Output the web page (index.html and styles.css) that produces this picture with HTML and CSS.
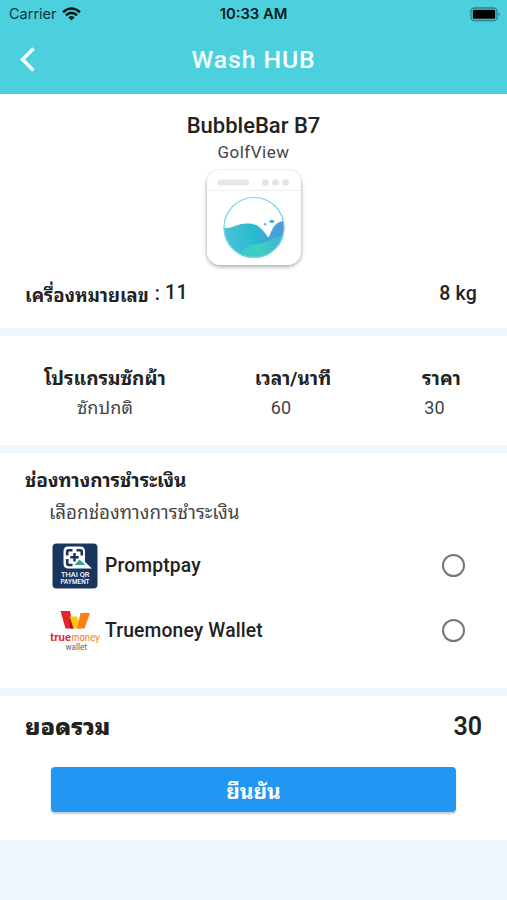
FILE: index.html
```
<!DOCTYPE html>
<html lang="th">
<head>
<meta charset="utf-8">
<title>Wash HUB</title>
<link rel="stylesheet" href="styles.css">
</head>
<body>
<header class="header">
  <div class="status">
    <div class="carrier"><span>Carrier</span>
      <svg width="19" height="14" viewBox="0 0 19 14" fill="none" stroke="#071a1d" stroke-width="2.5"><path d="M1 5.200Q9.500-2.200 18 5.200M3.900 8.200Q9.500 3.600 15.100 8.200"/><path d="M6.300 10.300Q9.500 7.500 12.700 10.300L9.500 13.500Z" fill="#071a1d" stroke="none"/></svg>
    </div>
    <div class="clock">10:33 AM</div>
    <svg class="battery" width="31" height="15" viewBox="0 0 31 15"><rect x="1" y="1" width="26" height="12.500" rx="3.500" fill="none" stroke="#2e7d86" stroke-width="1.300"/><rect x="2.800" y="2.800" width="22.400" height="9" rx="1.500" fill="#000"/><path d="M28.600 5.200Q31 7.200 28.600 9.400Z" fill="#2e7d86"/></svg>
  </div>
  <nav class="nav">
    <svg class="back" width="18" height="26" viewBox="0 0 18 26" fill="none" stroke="#fff" stroke-width="3.400"><path d="M15.500 1.500L4.500 12.500L15.500 23.500"/></svg>
    <h1>Wash HUB</h1>
  </nav>
</header>
<main>
  <section class="machine">
    <h2>BubbleBar B7</h2>
    <p>GolfView</p>
    <svg class="washer" width="106" height="108" viewBox="0 0 106 108">
      <defs>
        <linearGradient id="water" x1="0" y1="0" x2="1" y2="0"><stop offset="0" stop-color="#4bc4d8"/><stop offset=".5" stop-color="#27bad0"/><stop offset="1" stop-color="#5695da"/></linearGradient>
        <linearGradient id="foam" x1="0" y1="0" x2="1" y2="0"><stop offset="0" stop-color="#37cbc7"/><stop offset=".45" stop-color="#43d5c2"/><stop offset="1" stop-color="#41b4d4"/></linearGradient>
        <filter id="shade" x="-10%" y="-10%" width="120%" height="125%"><feDropShadow dx="0" dy="1.500" stdDeviation="2" flood-color="#000" flood-opacity=".38"/></filter>
        <clipPath id="drum"><circle cx="53" cy="58.500" r="30.500"/></clipPath>
      </defs>
      <rect x="6" y="1" width="94" height="95" rx="14" fill="#fff" filter="url(#shade)"/>
      <path d="M6 21.500H100" stroke="#ededed"/>
      <rect x="16.500" y="10.500" width="31.500" height="6" rx="3" fill="#e7e7e7"/>
      <g fill="#e3e3e3"><circle cx="64.500" cy="13.500" r="3.300"/><circle cx="74.500" cy="13.500" r="3.300"/><circle cx="84.500" cy="13.500" r="3.300"/></g>
      <g clip-path="url(#drum)">
        <path d="M22 59C31 60 37 54 46 54.500C57 54 61 60 67.500 68.500C71 62 73 52 84 52V92H22Z" fill="url(#water)"/>
        <path d="M39 92C40 78 48 75 58 75C68 74 72 67 84 66V92Z" fill="url(#foam)" opacity=".8"/>
      </g>
      <circle cx="53" cy="58.500" r="30" fill="none" stroke="#7bd3e4" stroke-width="1.200"/>
      <ellipse cx="70.800" cy="52.400" rx="2.400" ry="1.700" fill="#50a8d9"/><circle cx="64.200" cy="55.200" r="1.200" fill="#50b6d9"/><circle cx="72" cy="58" r=".6" fill="#79b9e1"/>
    </svg>
    <div class="row"><div class="number"><b>เครื่องหมายเลข</b><span class="colon">:</span><span>11</span></div><div class="weight">8 kg</div></div>
  </section>
  <section class="program">
    <div class="cell"><b>โปรแกรมซักผ้า</b><span>ซักปกติ</span></div>
    <div class="cell"><b class="time">เวลา/นาที</b><span>60</span></div>
    <div class="cell"><b class="price">ราคา</b><span class="amount">30</span></div>
  </section>
  <section class="payment">
    <h3>ช่องทางการชำระเงิน</h3>
    <p>เลือกช่องทางการชำระเงิน</p>
    <label class="option">
      <svg width="52" height="46" viewBox="0 0 52 46"><rect x="2.500" y=".5" width="45" height="45" rx="4" fill="#19365f"/>
        <path d="M18 3.500H30Q35 3.500 35 8.500V19L42 25.500H18.500Q13.500 25.500 13.500 20.500V8.500Q13.500 3.500 18 3.500Z" fill="#fff"/>
        <path d="M22.500 7.300H19Q17.200 7.300 17.200 9V12.500M26.500 7.300H30Q31.800 7.300 31.800 9V12.500M17.200 16V20Q17.200 22 19 22H22.500" fill="none" stroke="#19365f" stroke-width="2.600"/>
        <path d="M24.500 10V18.500M20.300 14.300H28.700" stroke="#19365f" stroke-width="2.500"/>
        <path d="M24.500 22L29.500 16.500L35.500 22Z" fill="#38a28d"/>
        <text x="11" y="34.400" class="qr" textLength="28.500" lengthAdjust="spacingAndGlyphs">THAI QR</text><text x="10.500" y="41" class="qr" textLength="29" lengthAdjust="spacingAndGlyphs">PAYMENT</text></svg>
      <span class="name">Promptpay</span><i class="radio"></i>
    </label>
    <label class="option">
      <svg class="truemoney" width="52" height="42" viewBox="0 0 52 42">
        <path d="M10.500 1H20L23.500 18.500H15.500Z" fill="#e8232d"/><path d="M19.500 6.500H27L31 18.500H22.800Z" fill="#fcc50d"/><path d="M30.500 3H40L34.500 18.500H27Z" fill="#f77f13"/><path d="M19.500 6.500L23.500 18.500H20Z" fill="#a91624"/>
        <text x="0" y="31" class="true" textLength="21" lengthAdjust="spacingAndGlyphs">true</text><text x="21.500" y="31" class="money" textLength="28.500" lengthAdjust="spacingAndGlyphs">money</text><text x="15.500" y="39.500" class="wallet" textLength="21.500" lengthAdjust="spacingAndGlyphs">wallet</text></svg>
      <span class="name">Truemoney Wallet</span><i class="radio"></i>
    </label>
  </section>
  <section class="total">
    <div class="sum"><b>ยอดรวม</b><span>30</span></div>
    <button>ยืนยัน</button>
  </section>
</main>
</body>
</html>
```
FILE: styles.css
```
* { box-sizing: border-box; }
body { margin: 0; height: 900px; overflow: hidden; background: #eff7fe; color: #222; font-family: Roboto, "Noto Sans Thai Looped", Loma, Garuda, Waree, Umpush, "Noto Serif Thai", "FreeSerif", serif; }
h1, h2, h3, p { margin: 0; }
svg { display: block; flex: none; }
.header { height: 94px; background: #4dd0de; }
.status { height: 28px; display: grid; grid-template-columns: 1fr auto 1fr; align-items: center; padding: 0 6px 0 9px; font: 14.500px/28px Inter, sans-serif; color: #0c363b; }
.carrier { display: flex; align-items: center; gap: 5px; }
.clock { font-weight: 600; font-size: 14.800px; margin-left: -3px; color: #071a1d; }
.battery { justify-self: end; }
.nav { height: 65px; display: grid; grid-template-columns: 36px 1fr 36px; align-items: center; padding-bottom: 2px; }
.back { margin-left: 18px; }
h1 { font-size: 24.800px; font-weight: 500; line-height: 30px; letter-spacing: .9px; color: #f4ffff; text-align: center; }
main { display: flex; flex-direction: column; gap: 8px; }
section { background: #fff; }
.machine { height: 234px; padding-top: 18px; display: flex; flex-direction: column; align-items: center; }
h2 { font-size: 22px; font-weight: 500; line-height: 27px; }
.machine p { font-size: 17px; line-height: 26px; letter-spacing: .5px; color: #444; }
.washer { margin-top: 4px; }
.row { width: 100%; display: flex; justify-content: space-between; align-items: center; height: 32px; padding: 0 30px 0 25px; font-size: 19.500px; font-weight: 500; letter-spacing: .2px; }
.number { display: flex; align-items: center; line-height: 26px; }
.number b { padding-top: 5px; margin-bottom: -1px; font-size: 18.500px; letter-spacing: 0; }
.colon { margin: 2px 5px 0 6px; }
.program { height: 109px; padding: 28px 25px 0; display: grid; grid-template-columns: 160px 192px 1fr; }
.cell { display: flex; flex-direction: column; align-items: center; font-size: 18px; line-height: 29px; letter-spacing: .1px; color: #444; }
.cell b { font-size: 19px; line-height: 29px; letter-spacing: 0; color: #222; }
.time, .price { margin-left: 24px; }
.time { letter-spacing: .4px; }
.amount { margin-left: 10px; }
.payment { height: 235px; padding: 14px 42px 0 25px; }
h3 { font-size: 19px; line-height: 28px; }
.payment p { margin-left: 24px; font-size: 18.800px; line-height: 36px; color: #444; }
.option { display: flex; align-items: center; height: 65px; margin-left: 25px; padding-top: 4px; }
.truemoney { overflow: visible; }
.name { flex: 1; margin-left: 3px; font-size: 19.300px; font-weight: 500; letter-spacing: .15px; }
.radio { width: 23px; height: 23px; border: 2.500px solid #757575; border-radius: 50%; }
.qr { font: 500 7px Roboto, sans-serif; fill: #fff; }
.true { font: 900 11.500px Lato, sans-serif; fill: #e8232d; }
.money { font: 500 11px Lato, sans-serif; fill: #f7821f; }
.wallet { font: 8.500px Roboto, sans-serif; fill: #666; }
.total { height: 144px; padding: 10px 25px 0; }
.sum { display: flex; justify-content: space-between; align-items: center; height: 40px; font-size: 25px; font-weight: 600; }
.sum b { font-size: 23px; margin-top: -3px; }
button { display: block; width: 405px; height: 45px; margin: 21px 0 0 26px; padding: 0; border: 0; border-radius: 4px; background: #2196f3; color: #fff; font: inherit; font-size: 21px; font-weight: bold; box-shadow: 0 2px 2px rgba(0,0,0,.22); }
```
